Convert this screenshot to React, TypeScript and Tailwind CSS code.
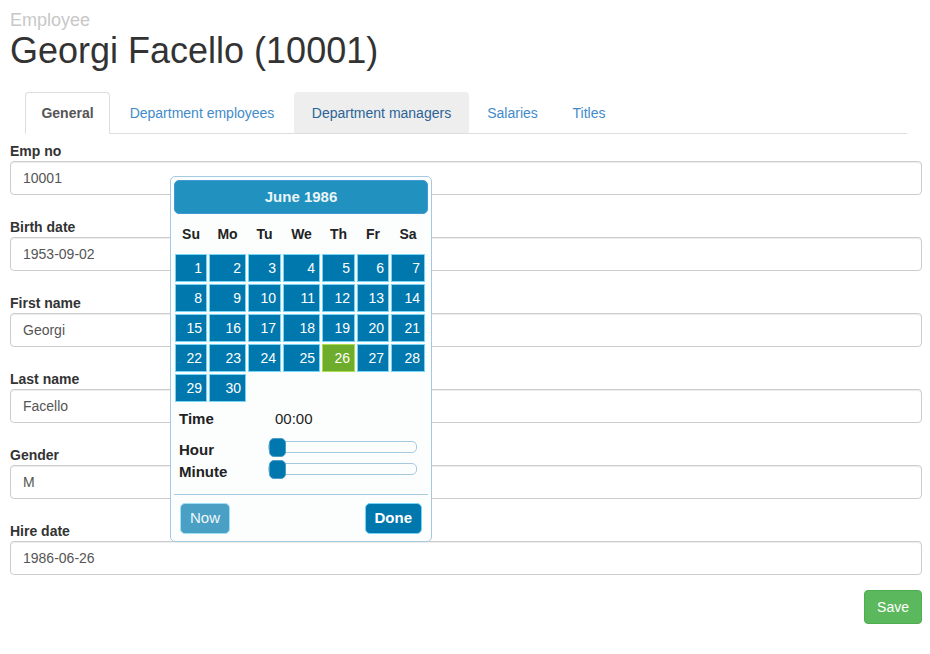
import React from 'react';

// Fixed widths so the weekday headers line up the way the table layout did
const weekdays = ['Su', 'Mo', 'Tu', 'We', 'Th', 'Fr', 'Sa'];
const days: (number | null)[] = [
  1, 2, 3, 4, 5, 6, 7,
  8, 9, 10, 11, 12, 13, 14,
  15, 16, 17, 18, 19, 20, 21,
  22, 23, 24, 25, 26, 27, 28,
  29, 30, null, null, null, null, null,
];

const tabs = [
  { name: 'General', state: 'active', w: 'w-[85px]' },
  { name: 'Department employees', state: '', w: 'w-[180px]' },
  { name: 'Department managers', state: 'hover', w: 'w-[175px]' },
  { name: 'Salaries', state: '', w: 'w-[83px]' },
  { name: 'Titles', state: '', w: 'w-[66px]' },
];

const fields = [
  { label: 'Emp no', value: '10001' },
  { label: 'Birth date', value: '1953-09-02' },
  { label: 'First name', value: 'Georgi' },
  { label: 'Last name', value: 'Facello' },
  { label: 'Gender', value: 'M' },
  { label: 'Hire date', value: '1986-06-26' },
];

function Slider() {
  return (
    <div className="relative h-[12px] w-[149px] rounded-[5px] border border-[#a6c9e2] bg-[#fcfdfd]">
      <div className="absolute left-0 top-[-4px] h-[19px] w-[17px] rounded-[5px] border border-[#4a9dc4] bg-[#0078ae]" />
    </div>
  );
}

function DatePicker() {
  return (
    <div className="absolute left-[170px] top-[176px] w-[262px] rounded-[5px] border border-[#a6c9e2] bg-[#fcfdfd] p-[3px] font-['Liberation_Sans',Arial,sans-serif] text-[#222]">
      {/* Month header */}
      <div className="flex h-[34px] items-center justify-center rounded-[5px] border border-[#4297d7] bg-[#2191c0] text-[15px] font-bold text-[#eaf5f7]">
        June 1986
      </div>

      {/* Weekdays + days share the same column tracks */}
      <div className="grid grid-cols-[34px_39px_35px_39px_35px_34px_36px]">
        {weekdays.map((d) => (
          <div key={d} className="flex h-[39px] items-center justify-center pt-[2px] text-[14px] font-bold text-[#222]">
            {d}
          </div>
        ))}
        {days.map((d, i) => (
          <div key={i} className="h-[30px] p-[1px]">
            {d !== null && (
              <div
                className={`flex h-[28px] items-center justify-end border pr-[4px] text-[14px] text-white ${
                  d === 26 ? 'border-[#acdd4a] bg-[#6eac2c]' : 'border-[#77d5f7] bg-[#0078ae]'
                }`}
              >
                {d}
              </div>
            )}
          </div>
        ))}
      </div>

      {/* Time */}
      <div className="mt-[6px] px-[5px]">
        <div className="flex h-[20px] items-center text-[15px]">
          <span className="w-[96px] font-bold">Time</span>
          <span>00:00</span>
        </div>
        <div className="mt-[7px] flex h-[22px] items-center">
          <span className="w-[89px] pt-[6px] text-[15px] font-bold">Hour</span>
          <Slider />
        </div>
        <div className="flex h-[22px] items-center">
          <span className="w-[89px] pt-[6px] text-[15px] font-bold">Minute</span>
          <Slider />
        </div>
      </div>

      {/* Buttons */}
      <div className="mt-[14px] flex items-center justify-between border-t border-[#a6c9e2] px-[6px] pb-[4px] pt-[8px]">
        <button
          type="button"
          className="h-[31px] rounded-[5px] border border-[#77d5f7] bg-[#0078ae] px-[9px] text-[15px] text-[#eaf5f7] opacity-70"
        >
          Now
        </button>
        <button
          type="button"
          className="h-[31px] rounded-[5px] border border-[#77d5f7] bg-[#0078ae] px-[9px] text-[15px] font-bold text-white"
        >
          Done
        </button>
      </div>
    </div>
  );
}

export default function App() {
  return (
    <div className="relative min-h-[654px] w-[930px] bg-white pl-[10px] pr-[8px] pt-[10px] font-['Liberation_Sans',Arial,sans-serif] text-[14px] text-[#333]">
      <div className="h-[20px] text-[18px] leading-[20px] text-[#c8c8c8]">Employee</div>
      <h1 className="mt-[1px] h-[40px] text-[36px] leading-[40px] text-[#333]">Georgi Facello (10001)</h1>

      {/* Tabs */}
      <ul className="ml-[15px] mr-[15px] mt-[21px] flex border-b border-[#ddd]">
        {tabs.map((t) => (
          <li key={t.name} className="-mb-px mr-[2px]">
            <a
              className={`block rounded-t-[4px] border py-[10px] text-center leading-[20px] ${t.w} ${
                t.state === 'active'
                  ? 'border-[#ddd] border-b-white bg-white font-bold text-[#555]'
                  : t.state === 'hover'
                  ? 'border-[#eee] border-b-[#ddd] bg-[#eee] text-[#2a6496]'
                  : 'border-transparent text-[#428bca]'
              }`}
            >
              {t.name}
            </a>
          </li>
        ))}
      </ul>

      {/* Form */}
      <form className="mt-[7px]">
        <div className="flex flex-col gap-[22px]">
          {fields.map((f) => (
            <div key={f.label}>
              <label className="block leading-[20px] font-bold text-[#333]">{f.label}</label>
              <div className="flex h-[34px] items-center rounded-[4px] border border-[#ccc] px-[12px] text-[#555] shadow-[inset_0_1px_1px_rgba(0,0,0,0.075)]">
                {f.value}
              </div>
            </div>
          ))}
        </div>
        <div className="mt-[15px] flex justify-end">
          <button
            type="button"
            className="h-[34px] rounded-[4px] border border-[#4cae4c] bg-[#5cb85c] px-[12px] text-[14px] text-white"
          >
            Save
          </button>
        </div>
      </form>

      <DatePicker />
    </div>
  );
}
